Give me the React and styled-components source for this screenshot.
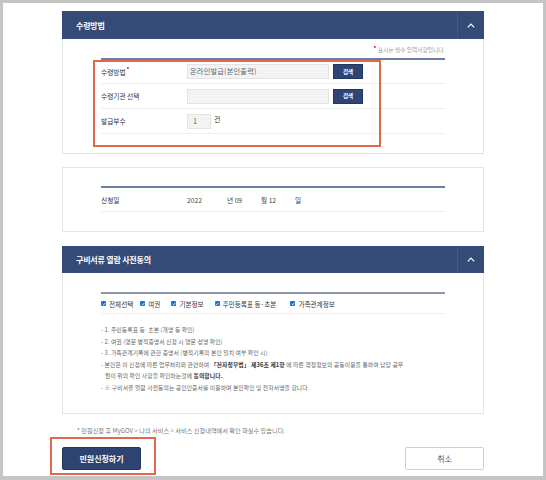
import React from 'react';
import styled, { createGlobalStyle } from 'styled-components';

const GlobalStyle = createGlobalStyle`
  html, body {
    margin: 0;
    padding: 0;
  }
  body {
    background: #c5c5c5;
    font-family: "Noto Sans CJK KR", "Noto Sans", sans-serif;
    color: #333;
  }
`;

// Styled components
const Frame = styled.div`
  margin: 3px 3px 0;
  height: 473px;
  background: #fff;
  overflow: hidden;
  display: flex;
  flex-direction: column;
  align-items: center;
  padding-top: 8px;
  box-sizing: border-box;
`;

const Panel = styled.section`
  position: relative;
  width: 422px;
  margin-top: ${props => props.gap || 0}px;
`;

const PanelHeader = styled.header`
  height: ${props => props.h || 28}px;
  background: #344b77;
  display: flex;
  align-items: center;
  justify-content: space-between;
`;

const PanelTitle = styled.h2`
  margin: 0;
  padding-left: 14px;
  font-size: 8px;
  font-weight: 700;
  color: #fff;
  letter-spacing: -0.2px;
`;

const Toggle = styled.div`
  width: 26px;
  height: 100%;
  border-left: 1px solid rgba(255, 255, 255, 0.08);
  display: flex;
  align-items: center;
  justify-content: center;
`;

const PanelBody = styled.div`
  border: 1px solid #e4e4e4;
  border-top: ${props => props.headless ? '1px solid #e4e4e4' : 'none'};
  padding: ${props => props.top || 0}px 38px 19px;
`;

const Required = styled.p`
  margin: 0;
  padding-top: 6px;
  height: 8px;
  line-height: 8px;
  text-align: right;
  font-size: 5.7px;
  color: #999;
  box-sizing: content-box;
  margin-bottom: 5px;
`;

const Dot = styled.span`
  color: #e0201c;
  font-size: 7px;
  position: relative;
  top: -3px;
  margin-right: 2px;
`;

const Rule = styled.div`
  height: 2px;
  background: ${props => props.color || '#6b7ea4'};
`;

const FormRow = styled.div`
  height: ${props => props.h || 24}px;
  box-sizing: border-box;
  border-bottom: 1px solid #efefef;
  display: flex;
  align-items: center;
`;

const Label = styled.div`
  width: 86px;
  flex-shrink: 0;
  font-size: 6.7px;
  color: #333;
`;

const Mark = styled.span`
  color: #e0201c;
  font-size: 7px;
  position: relative;
  top: -5px;
  margin-left: 1px;
`;

const Field = styled.div`
  width: ${props => props.w}px;
  height: 15px;
  box-sizing: border-box;
  background: #f3f3f3;
  border: 1px solid #e3e3e3;
  font-size: 7.2px;
  color: #666;
  line-height: 13px;
  padding-left: ${props => props.pad || 2}px;
  letter-spacing: 0.2px;
`;

const SearchButton = styled.button`
  margin-left: 4px;
  width: 30px;
  height: 15px;
  padding: 0;
  border: 1px solid #23375c;
  background: #2f4674;
  color: #fff;
  font-family: inherit;
  font-size: 5.5px;
  font-weight: 700;
`;

const Unit = styled.span`
  margin-left: 3px;
  font-size: 7px;
  color: #333;
  position: relative;
  top: -2px;
`;

const DatePart = styled.span`
  width: ${props => props.w}px;
  font-size: 6.7px;
  color: #444;
`;

const CheckRow = styled.div`
  height: 20px;
  box-sizing: border-box;
  border-bottom: 1px solid #efefef;
  display: flex;
  align-items: center;
`;

const CheckItem = styled.label`
  display: flex;
  align-items: center;
  gap: 3px;
  margin-right: ${props => props.gap}px;
  font-size: 6.6px;
  color: #333;
`;

const Box = styled.span`
  width: 5px;
  height: 5px;
  background: #1e6fd9;
  border-radius: 1px;
  display: flex;
  align-items: center;
  justify-content: center;
`;

const List = styled.ul`
  list-style: none;
  margin: 0;
  padding: 10px 0 0;
`;

const Item = styled.li`
  font-size: 5.8px;
  line-height: 11.6px;
  color: #666;
  padding-left: 4px;
  text-indent: -4px;
  letter-spacing: 0.1px;

  b {
    color: #333;
    font-weight: 700;
  }
`;

const Notice = styled.p`
  width: 422px;
  margin: 13px 0 0;
  padding-left: 15px;
  box-sizing: border-box;
  font-size: 6.2px;
  line-height: 8px;
  color: #777;
`;

const Actions = styled.div`
  position: relative;
  width: 422px;
  margin-top: 12px;
  display: flex;
  justify-content: space-between;
`;

const ActionButton = styled.button`
  width: 79px;
  height: 23px;
  padding: 0;
  border-radius: 2px;
  font-family: inherit;
  font-size: 8px;
  font-weight: ${props => props.primary ? 700 : 400};
  color: ${props => props.primary ? '#fff' : '#555'};
  background: ${props => props.primary ? '#2d4472' : '#fff'};
  border: 1px solid ${props => props.primary ? '#22355a' : '#cfcfcf'};
`;

const Highlight = styled.div`
  position: absolute;
  left: ${props => props.x}px;
  top: ${props => props.y}px;
  width: ${props => props.w}px;
  height: ${props => props.h}px;
  border: 2px solid #df6a4b;
  box-sizing: border-box;
  pointer-events: none;
`;

const Chevron = () => (
  <svg width="8" height="5" viewBox="0 0 8 5">
    <polyline points="0.8,4.3 4,1 7.2,4.3" fill="none" stroke="#fff" strokeWidth="1.2" />
  </svg>
);

const Check = () => (
  <Box>
    <svg width="4" height="4" viewBox="0 0 4 4">
      <polyline points="0.6,2.1 1.6,3 3.4,0.9" fill="none" stroke="#fff" strokeWidth="0.8" />
    </svg>
  </Box>
);

const checks = [
  { label: '전체선택', gap: 7 },
  { label: '여권', gap: 11 },
  { label: '기본정보', gap: 11 },
  { label: '주민등록표 등·초본', gap: 14 },
  { label: '가족관계정보', gap: 0 },
];

export default function App() {
  return (
    <>
      <GlobalStyle />
      <Frame>
        <Panel>
          <PanelHeader>
            <PanelTitle>수령방법</PanelTitle>
            <Toggle><Chevron /></Toggle>
          </PanelHeader>
          <PanelBody>
            <Required><Dot>•</Dot>표시는 필수 입력사항입니다.</Required>
            <Rule />
            <FormRow>
              <Label>수령방법<Mark>•</Mark></Label>
              <Field w={142}>온라인발급(본인출력)</Field>
              <SearchButton>검색</SearchButton>
            </FormRow>
            <FormRow h={25}>
              <Label>수령기관 선택</Label>
              <Field w={142} />
              <SearchButton>검색</SearchButton>
            </FormRow>
            <FormRow h={25}>
              <Label>발급부수</Label>
              <Field w={24} pad={5}>1</Field>
              <Unit>건</Unit>
            </FormRow>
          </PanelBody>
          <Highlight x={31} y={49} w={288} h={87} />
        </Panel>

        <Panel gap={13}>
          <PanelBody headless top={18}>
            <Rule />
            <FormRow>
              <Label>신청일</Label>
              <DatePart w={40}>2022</DatePart>
              <DatePart w={34}>년 09</DatePart>
              <DatePart w={34}>월 12</DatePart>
              <DatePart w={10}>일</DatePart>
            </FormRow>
          </PanelBody>
        </Panel>

        <Panel gap={14}>
          <PanelHeader h={27}>
            <PanelTitle>구비서류 열람 사전동의</PanelTitle>
            <Toggle><Chevron /></Toggle>
          </PanelHeader>
          <PanelBody top={19}>
            <Rule color="#8c97ab" />
            <CheckRow>
              {checks.map(c => (
                <CheckItem key={c.label} gap={c.gap}>
                  <Check />
                  {c.label}
                </CheckItem>
              ))}
            </CheckRow>
            <List>
              <Item>- 1. 주민등록표 등·초본 (개명 등 확인)</Item>
              <Item>- 2. 여권 (영문 병적증명서 신청 시 영문 성명 확인)</Item>
              <Item>- 3. 가족관계기록에 관한 증명서 (병적기록의 본인 일치 여부 확인 시)</Item>
              <Item>
                - 본인은 이 신청에 따른 업무처리와 관련하여 <b>「전자정부법」 제36조 제1항</b> 에 따른 행정정보의 공동이용을 통하여 담당 공무<br />
                원이 위의 확인 사항을 확인하는것에 <b>동의합니다.</b>
              </Item>
              <Item>- ※ 구비서류 열람 사전동의는 공인인증서를 이용하여 본인확인 및 전자서명을 합니다.</Item>
            </List>
          </PanelBody>
        </Panel>

        <Notice>* 민원신청 후 MyGOV &gt; 나의 서비스 &gt; 서비스 신청내역에서 확인 하실수 있습니다.</Notice>

        <Actions>
          <ActionButton primary>민원신청하기</ActionButton>
          <ActionButton>취소</ActionButton>
          <Highlight x={-12} y={-10} w={106} h={38} />
        </Actions>
      </Frame>
    </>
  );
}
